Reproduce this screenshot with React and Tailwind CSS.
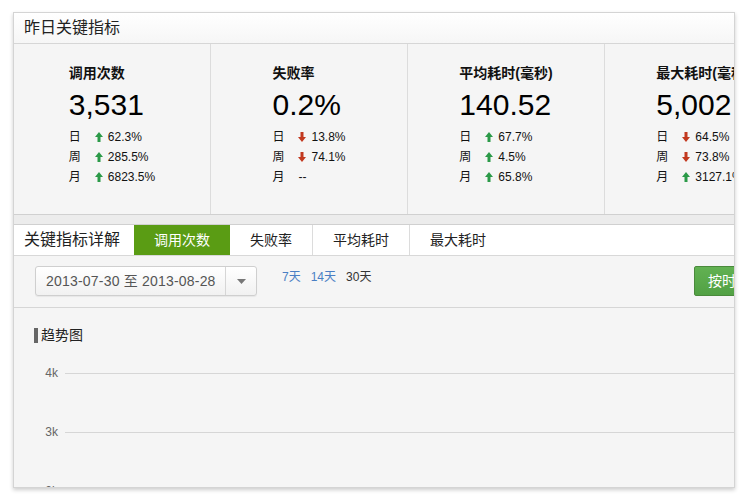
import React from 'react';

const metrics = [
  {
    title: '调用次数',
    value: '3,531',
    rows: [
      { label: '日', dir: 'up', text: '62.3%' },
      { label: '周', dir: 'up', text: '285.5%' },
      { label: '月', dir: 'up', text: '6823.5%' },
    ],
  },
  {
    title: '失败率',
    value: '0.2%',
    rows: [
      { label: '日', dir: 'down', text: '13.8%' },
      { label: '周', dir: 'down', text: '74.1%' },
      { label: '月', dir: null, text: '--' },
    ],
  },
  {
    title: '平均耗时(毫秒)',
    value: '140.52',
    rows: [
      { label: '日', dir: 'up', text: '67.7%' },
      { label: '周', dir: 'up', text: '4.5%' },
      { label: '月', dir: 'up', text: '65.8%' },
    ],
  },
  {
    title: '最大耗时(毫秒)',
    value: '5,002',
    rows: [
      { label: '日', dir: 'down', text: '64.5%' },
      { label: '周', dir: 'down', text: '73.8%' },
      { label: '月', dir: 'up', text: '3127.1%' },
    ],
  },
];

const tabs = ['调用次数', '失败率', '平均耗时', '最大耗时'];

const Arrow = ({ dir }) => {
  if (dir === 'up') {
    return (
      <svg className="w-[8px] h-[10px] mr-[5px]" viewBox="0 0 8 10">
        <path d="M4 0L8 5H5.5V10H2.5V5H0Z" fill="#2b9a48" />
      </svg>
    );
  }
  return (
    <svg className="w-[8px] h-[10px] mr-[5px]" viewBox="0 0 8 10">
      <path d="M4 10L8 5H5.5V0H2.5V5H0Z" fill="#c2391f" />
    </svg>
  );
};

const MetricCard = ({ metric }) => (
  <div className="w-[197px] shrink-0 border-r border-[#dcdcdc] flex justify-center pt-[19px]">
    <div className="text-left">
      <div className="text-[14px] leading-[20px] font-bold text-[#111]">{metric.title}</div>
      <div className="text-[30px] leading-[36px] mt-[4px] text-[#000]">{metric.value}</div>
      <div className="mt-[4px] text-[12px] leading-[20px] text-[#111]">
        {metric.rows.map((row) => (
          <div key={row.label} className="flex items-center whitespace-nowrap">
            <span className="w-[26px]">{row.label}</span>
            {row.dir && <Arrow dir={row.dir} />}
            <span>{row.text}</span>
          </div>
        ))}
      </div>
    </div>
  </div>
);

const GridRow = ({ label }) => (
  <div className="flex items-center h-[20px]">
    <span className="w-[44px] text-right text-[12px] text-[#666]">{label}</span>
    <div className="flex-1 ml-[7px] h-px bg-[#d6d6d6]" />
  </div>
);

export default function App() {
  return (
    <div className="w-[750px] h-[500px] bg-white pt-[12px] pl-[13px] font-['Liberation_Sans','Noto_Sans_CJK_SC',sans-serif]">
      <div className="w-[722px] h-[476px] overflow-hidden border border-[#d4d4d4] bg-[#f5f5f5] shadow-[0_2px_4px_rgba(0,0,0,0.2)] flex flex-col">
        {/* header */}
        <div className="h-[31px] shrink-0 flex items-center pl-[10px] border-b border-[#d6d6d6] bg-gradient-to-b from-white to-[#f6f6f6] text-[16px] text-[#222]">
          昨日关键指标
        </div>

        {/* metrics */}
        <div className="h-[171px] shrink-0 flex w-[790px] border-b border-[#d0d0d0]">
          {metrics.map((m) => (
            <MetricCard key={m.title} metric={m} />
          ))}
        </div>

        <div className="h-[10px] shrink-0 bg-[#ececec] border-b border-[#d0d0d0]" />

        {/* tabs */}
        <div className="h-[31px] shrink-0 flex bg-white border-b border-[#d8d8d8]">
          <div className="flex items-center pl-[10px] pr-[14px] text-[16px] text-[#222]">关键指标详解</div>
          {tabs.map((t, i) => (
            <div
              key={t}
              className={
                i === 0
                  ? 'flex items-center px-5 text-[14px] bg-[#5a9c14] text-white'
                  : i === tabs.length - 1
                  ? 'flex items-center px-5 text-[14px] text-[#222]'
                  : 'flex items-center px-5 text-[14px] text-[#222] border-r border-[#dcdcdc]'
              }
            >
              {t}
            </div>
          ))}
        </div>

        {/* filter row */}
        <div className="h-[52px] shrink-0 flex items-start w-[810px] pl-[21px] pt-[10px] border-b border-[#d6d6d6]">
          <div className="flex h-[30px] w-[222px] rounded-[3px] border border-[#cfcfcf] bg-gradient-to-b from-white to-[#f1f1f1] shadow-[0_1px_1px_rgba(0,0,0,0.06)]">
            <div className="flex-1 flex items-center pl-[10px] text-[14px] tracking-[0.2px] text-[#555] whitespace-nowrap">
              2013-07-30 至 2013-08-28
            </div>
            <div className="w-[31px] flex items-center justify-center border-l border-[#d6d6d6]">
              <svg className="w-[9px] h-[5px]" viewBox="0 0 9 5">
                <path d="M0 0H9L4.5 5Z" fill="#777" />
              </svg>
            </div>
          </div>
          <div className="flex gap-[10px] ml-[25px] text-[12px] leading-[20px] pt-[1px]">
            <span className="text-[#4a7fc4]">7天</span>
            <span className="text-[#4a7fc4]">14天</span>
            <span className="text-[#333]">30天</span>
          </div>
          <button className="ml-auto mr-[32px] h-[30px] px-[13px] rounded-[2px] border border-[#4a8a3c] bg-gradient-to-b from-[#62b152] to-[#52a144] text-white text-[14px] whitespace-nowrap">
            按时间聚合
          </button>
        </div>

        {/* chart */}
        <div className="flex-1 flex flex-col pt-[17px]">
          <div className="flex items-center pl-[20px] h-[20px]">
            <div className="w-[4px] h-[15px] bg-[#666]" />
            <span className="ml-[3px] text-[14px] text-[#222]">趋势图</span>
          </div>
          <div className="mt-[18px]">
            <GridRow label="4k" />
          </div>
          <div className="mt-[39px]">
            <GridRow label="3k" />
          </div>
          <div className="mt-[39px]">
            <GridRow label="2k" />
          </div>
        </div>
      </div>
    </div>
  );
}
